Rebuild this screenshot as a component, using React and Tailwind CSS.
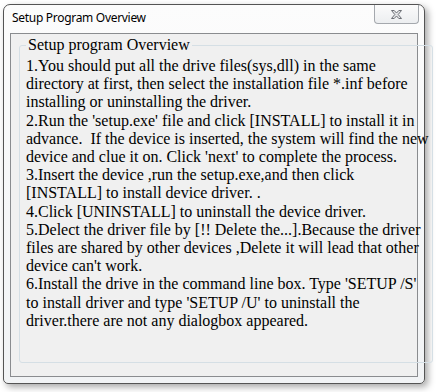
import React from "react";

// Old Win7-style dialog showing the setup instructions (lines kept as in the dialog)
const paragraphs = [
  [
    "1.You should put all the drive files(sys,dll) in the same",
    "directory at first, then select the installation file *.inf before",
    "installing or uninstalling the driver.",
  ],
  [
    "2.Run the 'setup.exe' file and click [INSTALL] to install it in",
    "advance.  If the device is inserted, the system will find the new",
    "device and clue it on. Click 'next' to complete the process.",
  ],
  [
    "3.Insert the device ,run the setup.exe,and then click",
    "[INSTALL] to install device driver. .",
  ],
  ["4.Click [UNINSTALL] to uninstall the device driver."],
  [
    "5.Delect the driver file by [!! Delete the...].Because the driver",
    "files are shared by other devices ,Delete it will lead that other",
    "device can't work.",
  ],
  [
    "6.Install the drive in the command line box. Type 'SETUP /S'",
    "to install driver and type 'SETUP /U' to uninstall the",
    "driver.there are not any dialogbox appeared.",
  ],
];

function CloseButton() {
  return (
    <div className="w-[45px] h-[19px] mr-[5px] flex items-center justify-center border border-t-0 border-[#a4a8ad] rounded-b-[4px] bg-gradient-to-b from-[#fbfbfb] to-[#eceef0]">
      <svg width="11" height="9" viewBox="0 0 11 9">
        <path
          d="M0.5 0.5 H3.2 L5.5 3 L7.8 0.5 H10.5 L7.2 4.5 L10.5 8.5 H7.8 L5.5 6 L3.2 8.5 H0.5 L3.8 4.5 Z"
          fill="#e4e5e7"
          stroke="#6d7076"
          strokeWidth="1"
          strokeLinejoin="round"
        />
      </svg>
    </div>
  );
}

export default function App() {
  return (
    <div className="w-[440px] h-[392px] bg-white overflow-hidden pt-[4px] pl-[3px] [font-family:'Liberation_Serif',serif]">
      <div className="w-[422px] h-[380px] flex flex-col border border-[#545454] rounded-t-[7px] rounded-b-[5px] bg-gradient-to-b from-[#fcfcfc] to-[#f1f3f5] shadow-[3px_3px_7px_rgba(0,0,0,0.35)]">
        {/* Title bar */}
        <div className="h-[28px] flex justify-between items-start">
          <span className="pl-[8px] pt-[5px] text-[12px] leading-[16px] tracking-[-0.3px] text-black [font-family:'Noto_Sans',sans-serif]">
            Setup Program Overview
          </span>
          <CloseButton />
        </div>

        {/* Client area */}
        <div className="ml-[6px] mr-[6px] mb-[6px] flex-1 border border-[#8a8c8f] bg-[#f0f0f0] pt-[11px] pl-[8px] pr-[10px] pb-[13px] flex">
          {/* Group box */}
          <div className="flex-1 flex flex-col border border-[#d5dfe5] rounded-[3px] pl-[6px] pr-[3px] text-[16px] text-black [font-family:'Liberation_Serif',serif]">
            <span className="self-start -mt-[10px] px-[2px] leading-[18px] bg-[#f0f0f0] [font-family:'Liberation_Serif',serif]">
              Setup program Overview
            </span>
            <div className="mt-[3px] leading-[18.2px] [font-family:'Liberation_Serif',serif]">
              {paragraphs.map((lines, i) => (
                <p key={i}>
                  {lines.map((line, j) => (
                    <span key={j} className="block whitespace-pre [font-family:'Liberation_Serif',serif]">
                      {line}
                    </span>
                  ))}
                </p>
              ))}
            </div>
          </div>
        </div>
      </div>
    </div>
  );
}
